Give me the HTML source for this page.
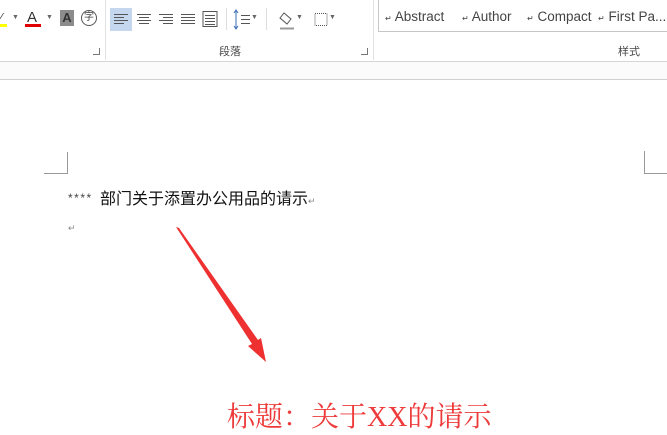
<!DOCTYPE html>
<html><head><meta charset="utf-8"><style>
*{margin:0;padding:0;box-sizing:border-box}
body{width:667px;height:420px;overflow:hidden;background:#fff;position:relative;font-family:"Liberation Sans","Noto Sans CJK SC",sans-serif}
.a{position:absolute}
.dd{position:absolute;font-size:7px;color:#666}
.st{position:absolute;top:9px;font-size:13.5px;color:#444;white-space:nowrap}
.st span{font-size:8px}
</style></head><body>
<div class="a" style="left:0;top:0;width:667px;height:61px;background:#fff"></div>
<div class="a" style="left:0;top:61px;width:667px;height:1px;background:#d6d6d6"></div>
<div class="a" style="left:0;top:62px;width:667px;height:17px;background:#fbfbfb"></div>
<div class="a" style="left:0;top:79px;width:667px;height:1px;background:#d0d0d0"></div>
<div class="a" style="left:105px;top:0;width:1px;height:60px;background:#e1e1e1"></div>
<div class="a" style="left:373px;top:0;width:1px;height:60px;background:#e1e1e1"></div>
<div class="a" style="left:0;top:12px;width:6px;height:8px;font-size:11px;color:#444;transform:skewX(-20deg)">/</div>
<div class="a" style="left:0;top:24px;width:7px;height:3px;background:#ffff00"></div>
<div class="dd" style="left:12px;top:14px">▼</div>
<div class="a" style="left:27px;top:9px;font-size:15px;color:#333">A</div>
<div class="a" style="left:25px;top:24px;width:16px;height:3px;background:#e00000"></div>
<div class="dd" style="left:46px;top:14px">▼</div>
<div class="a" style="left:60px;top:10px;width:14px;height:16px;background:#8c8c8c;color:#333;font-size:13px;font-weight:bold;text-align:center;line-height:16px">A</div>
<div class="a" style="left:81px;top:10px;width:16px;height:16px;border:1px solid #555;border-radius:50%;font-size:10px;text-align:center;line-height:14px;color:#444">字</div>
<div class="a" style="left:110px;top:8px;width:22px;height:23px;background:#c5d7ef"></div>
<svg class="a" style="left:110px;top:8px" width="120" height="24">
<g stroke="#555" stroke-width="1">
<path d="M4 6.5h14M4 9.5h10M4 12.5h14M4 15.5h10"/>
<path d="M27 6.5h14M29 9.5h10M27 12.5h14M29 15.5h10"/>
<path d="M49 6.5h14M53 9.5h10M49 12.5h14M53 15.5h10"/>
<path d="M71 6.5h14M71 9.5h14M71 12.5h14M71 15.5h14"/>
<path d="M93 3.5h14M93 18.5h14M93 3v16M107 3v16M95 7.5h10M95 10.5h10M95 13.5h10M95 16.5h10"/>
</g></svg>
<div class="a" style="left:226px;top:8px;width:1px;height:22px;background:#ddd"></div>
<svg class="a" style="left:232px;top:8px" width="100" height="24">
<g stroke="#555" fill="none"><path d="M4 3v17M2 5l2-3 2 3M2 18l2 3 2-3" stroke="#3a6fb5"/><path d="M9 7.5h9M9 11.5h9M9 15.5h9"/>
<path d="M52 5l7 6-4 5-7-6z"/><path d="M48 20.5h14" stroke="#999" stroke-width="2"/>
<path d="M83 5.5h12v12H83z" stroke-dasharray="1 1"/></g></svg>
<div class="dd" style="left:251px;top:14px">▼</div>
<div class="dd" style="left:296px;top:14px">▼</div>
<div class="dd" style="left:329px;top:14px">▼</div>
<div class="a" style="left:266px;top:8px;width:1px;height:22px;background:#ddd"></div>
<div class="a" style="left:219px;top:43px;font-size:11px;color:#444">段落</div>
<div class="a" style="left:93px;top:48px;width:7px;height:7px;border-right:1px solid #777;border-bottom:1px solid #777"></div>
<div class="a" style="left:361px;top:48px;width:7px;height:7px;border-right:1px solid #777;border-bottom:1px solid #777"></div>
<div class="a" style="left:378px;top:0;width:300px;height:32px;border-left:1px solid #c6c6c6;border-bottom:1px solid #c6c6c6"></div>
<div class="st" style="left:385px"><span>↵</span> Abstract</div>
<div class="st" style="left:462px"><span>↵</span> Author</div>
<div class="st" style="left:527px"><span>↵</span> Compact</div>
<div class="st" style="left:598px"><span>↵</span> First Pa...</div>
<div class="a" style="left:618px;top:43px;font-size:11px;color:#444">样式</div>
<div class="a" style="left:67px;top:152px;width:1px;height:21px;background:#999"></div>
<div class="a" style="left:44px;top:173px;width:24px;height:1px;background:#999"></div>
<div class="a" style="left:644px;top:151px;width:1px;height:22px;background:#999"></div>
<div class="a" style="left:644px;top:173px;width:23px;height:1px;background:#999"></div>
<div class="a" style="left:68px;top:191px;font-size:12px;color:#444;letter-spacing:1.5px">****</div>
<div class="a" style="left:100px;top:185px;font-size:16px;color:#111;white-space:nowrap">部门关于添置办公用品的请示<span style="font-size:9px;color:#888">↵</span></div>
<div class="a" style="left:68px;top:223px;font-size:9px;color:#888">↵</div>
<svg class="a" style="left:0;top:0" width="667" height="420">
<polygon points="176,227 179,228 258,340 261,338 266,362 248,346 252,344" fill="#ee3030"/>
</svg>
<div class="a" style="left:227px;top:395px;font-size:28px;color:#ee3a3a;font-family:'Liberation Serif','Noto Serif CJK SC',serif;white-space:nowrap">标题：关于XX的请示</div>
</body></html>
